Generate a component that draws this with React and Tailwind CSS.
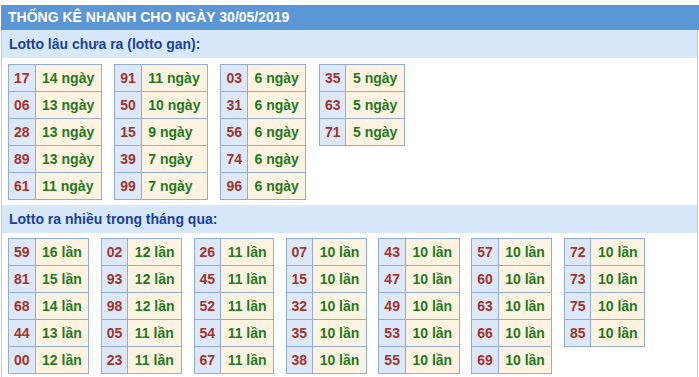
import React from "react";

const ganCols = [
  [["17", "14 ngày"], ["06", "13 ngày"], ["28", "13 ngày"], ["89", "13 ngày"], ["61", "11 ngày"]],
  [["91", "11 ngày"], ["50", "10 ngày"], ["15", "9 ngày"], ["39", "7 ngày"], ["99", "7 ngày"]],
  [["03", "6 ngày"], ["31", "6 ngày"], ["56", "6 ngày"], ["74", "6 ngày"], ["96", "6 ngày"]],
  [["35", "5 ngày"], ["63", "5 ngày"], ["71", "5 ngày"]],
];

const nhieuCols = [
  [["59", "16 lần"], ["81", "15 lần"], ["68", "14 lần"], ["44", "13 lần"], ["00", "12 lần"]],
  [["02", "12 lần"], ["93", "12 lần"], ["98", "12 lần"], ["05", "11 lần"], ["23", "11 lần"]],
  [["26", "11 lần"], ["45", "11 lần"], ["52", "11 lần"], ["54", "11 lần"], ["67", "11 lần"]],
  [["07", "10 lần"], ["15", "10 lần"], ["32", "10 lần"], ["35", "10 lần"], ["38", "10 lần"]],
  [["43", "10 lần"], ["47", "10 lần"], ["49", "10 lần"], ["53", "10 lần"], ["55", "10 lần"]],
  [["57", "10 lần"], ["60", "10 lần"], ["63", "10 lần"], ["66", "10 lần"], ["69", "10 lần"]],
  [["72", "10 lần"], ["73", "10 lần"], ["75", "10 lần"], ["85", "10 lần"]],
];

const LottoTable = ({ rows }) => (
  <table className="border-collapse">
    <tbody>
      {rows.map(([num, val], i) => (
        <tr key={i} className="h-[27px]">
          <td className="border border-[#93acdd] bg-[#dde9fa] py-0 px-[5px] text-[#a3342a]">{num}</td>
          <td className="border border-[#93acdd] bg-[#fff3e1] py-0 px-[6.5px] text-[#1e7a1e]">{val}</td>
        </tr>
      ))}
    </tbody>
  </table>
);

const SectionTitle = ({ children }) => (
  <div className="h-[28px] bg-[#d6e8fa] flex items-center pl-[7px] text-[14px] font-bold text-[#1c3f9c]">
    {children}
  </div>
);

export default function App() {
  return (
    <div className="bg-white w-[699px] h-[377px] overflow-hidden pt-[5px] pl-[1px] font-['Liberation_Sans',Arial,sans-serif]">
      <div className="h-[25px] bg-[#5b96d6] flex items-center pl-[7px] text-[14px] font-bold text-white">
        THỐNG KÊ NHANH CHO NGÀY 30/05/2019
      </div>
      <div className="w-[697px] h-[400px] border-r border-l border-[#c9c9c9]">
        <SectionTitle>Lotto lâu chưa ra (lotto gan):</SectionTitle>
        <div className="flex items-start gap-[12.5px] mt-[6px] pl-[6px] text-[14px] font-bold">
          {ganCols.map((rows, i) => (
            <LottoTable key={i} rows={rows} />
          ))}
        </div>
        <div className="mt-[5px]">
          <SectionTitle>Lotto ra nhiều trong tháng qua:</SectionTitle>
        </div>
        <div className="flex items-start gap-[11.5px] mt-[5px] pl-[6px] text-[14px] font-bold">
          {nhieuCols.map((rows, i) => (
            <LottoTable key={i} rows={rows} />
          ))}
        </div>
      </div>
    </div>
  );
}
